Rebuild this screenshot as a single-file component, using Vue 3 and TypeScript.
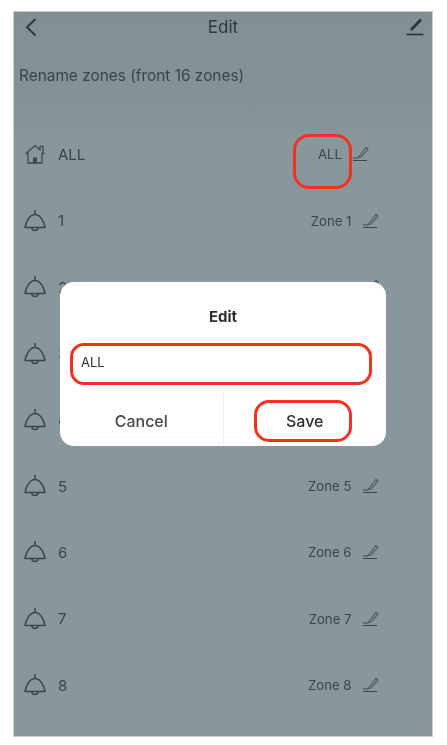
<template>
  <div class="screen">
    <header class="topbar">
      <svg class="back" viewBox="0 0 14 20" width="14" height="20">
        <path d="M11.500 2 3 10.200 11.500 18.500" fill="none" stroke="#2f393c" stroke-width="2" />
      </svg>
      <span class="topbar-title">Edit</span>
      <svg class="edit" viewBox="0 0 20 20" width="20" height="20">
        <path d="M6 13 16 2.500" fill="none" stroke="#2a3437" stroke-width="2.600" />
        <path d="M1.500 17.500h17" fill="none" stroke="#2a3437" stroke-width="1.600" />
      </svg>
    </header>

    <p class="subtitle">Rename zones (front 16 zones)</p>

    <ul class="zones">
      <li v-for="zone in zones" :key="zone.id" class="zone" :class="{ all: zone.id === 'ALL' }">
        <svg v-if="zone.id === 'ALL'" class="zone-icon" viewBox="0 0 22 22" width="22" height="22">
          <path
            d="M1.500 11 11 2.500l5 4.300V3.400h3v6.200l1.500 1.400M4 9.500V20h14V9.500"
            fill="none"
            stroke="#3d484b"
            stroke-width="1.300"
          />
          <rect x="9" y="14.500" width="4" height="5.500" fill="#3d484b" />
        </svg>
        <svg v-else class="zone-icon" viewBox="0 0 22 22" width="22" height="22">
          <path
            d="M11 0v4.500M1 17.500C2 12 5.500 4.500 11 4.500S20 12 21 17.500ZM7.500 17.500C8 21.500 14 21.500 14.500 17.500"
            fill="none"
            stroke="#3a4548"
            stroke-width="1.500"
            stroke-linejoin="round"
          />
        </svg>
        <span class="zone-id">{{ zone.id }}</span>
        <span class="zone-name">{{ zone.name }}</span>
        <svg class="pencil" viewBox="0 0 16 16" width="16" height="16">
          <path d="M6 10.500 13 1.500l2 1.500-7 8-2.500.5Z" fill="none" stroke="#4a5558" stroke-width="1.100" />
          <path d="M0 12h5M0 14.500h14" fill="none" stroke="#3a4548" stroke-width="1.200" />
        </svg>
      </li>
    </ul>

    <div class="mark mark-all"></div>

    <div class="dialog">
      <div class="dialog-title">Edit</div>
      <div class="dialog-input">ALL</div>
      <div class="dialog-actions">
        <button class="action">Cancel</button>
        <button class="action save">Save</button>
      </div>
    </div>
  </div>
</template>

<script setup lang="ts">
interface Zone {
  id: string
  name: string
}

const zones: Zone[] = [
  { id: 'ALL', name: 'ALL' },
  ...[1, 2, 3, 4, 5, 6, 7, 8].map((n) => ({ id: String(n), name: `Zone ${n}` })),
]
</script>

<style>
html,
body {
  background: #fff;
}
</style>

<style scoped>
.screen {
  position: relative;
  box-sizing: border-box;
  width: 420px;
  height: 726px;
  margin: 11px 0 0 13px;
  background: linear-gradient(#809093 0, #839397 110px, #88979b 125px);
  border: 1px solid #c9cfd0;
  font-family: 'Inter', 'Liberation Sans', sans-serif;
  color: #3a4548;
  overflow: hidden;
  filter: blur(0.4px);
}

.topbar {
  display: flex;
  align-items: center;
  justify-content: space-between;
  height: 30px;
  padding: 0 7px 0 10px;
  position: relative;
}

.topbar-title {
  position: absolute;
  left: 0;
  right: 0;
  text-align: center;
  font-size: 17px;
  color: #2f393c;
}

.subtitle {
  margin: 0;
  padding: 25px 0 0 5px;
  height: 79.500px;
  box-sizing: border-box;
  font-size: 15.400px;
  line-height: 18px;
}

.zones {
  list-style: none;
  margin: 0;
  padding: 0;
}

.zone {
  display: flex;
  align-items: center;
  height: 66.300px;
  padding: 0 53.500px 0 10px;
  font-size: 15px;
}

.zone.all {
  padding-right: 63px;
  border-bottom: 1px solid #829195;
  box-sizing: border-box;
}

.zone-icon {
  flex: none;
}

.zone-id {
  margin-left: 12px;
}

.zone-name {
  margin-left: auto;
  font-size: 13.200px;
}

.pencil {
  margin-left: 11px;
  flex: none;
}

.mark {
  position: absolute;
  box-sizing: border-box;
  border: 3.500px solid #f5311e;
}

.mark-all {
  left: 279px;
  top: 122px;
  width: 59px;
  height: 55px;
  border-radius: 16px;
}

.dialog {
  position: absolute;
  left: 46px;
  top: 270px;
  width: 326px;
  height: 164px;
  background: #fff;
  border-radius: 14px;
  color: #2b2f31;
}

.dialog-title {
  margin-top: 25px;
  text-align: center;
  font-size: 15px;
  font-weight: 700;
  line-height: 20px;
}

.dialog-input {
  box-sizing: border-box;
  margin: 16px 14px 0 10px;
  height: 42px;
  padding-left: 8px;
  border: 3.500px solid #f5311e;
  border-radius: 14px;
  font-size: 13px;
  line-height: 33px;
}

.dialog-actions {
  display: flex;
  height: 53px;
  margin-top: 8px;
  align-items: stretch;
}

.action {
  flex: 1;
  border: 0;
  padding: 2px 0 0;
  background: none;
  font: inherit;
  font-size: 16px;
  font-weight: 500;
  color: #44494b;
}

.action.save {
  position: relative;
  border-left: 1px solid #eef0f0;
  color: #2b2f31;
}

.save::after {
  content: '';
  position: absolute;
  left: 30px;
  top: 7px;
  width: 98px;
  height: 42px;
  box-sizing: border-box;
  border: 3.500px solid #f5311e;
  border-radius: 15px;
}
</style>
